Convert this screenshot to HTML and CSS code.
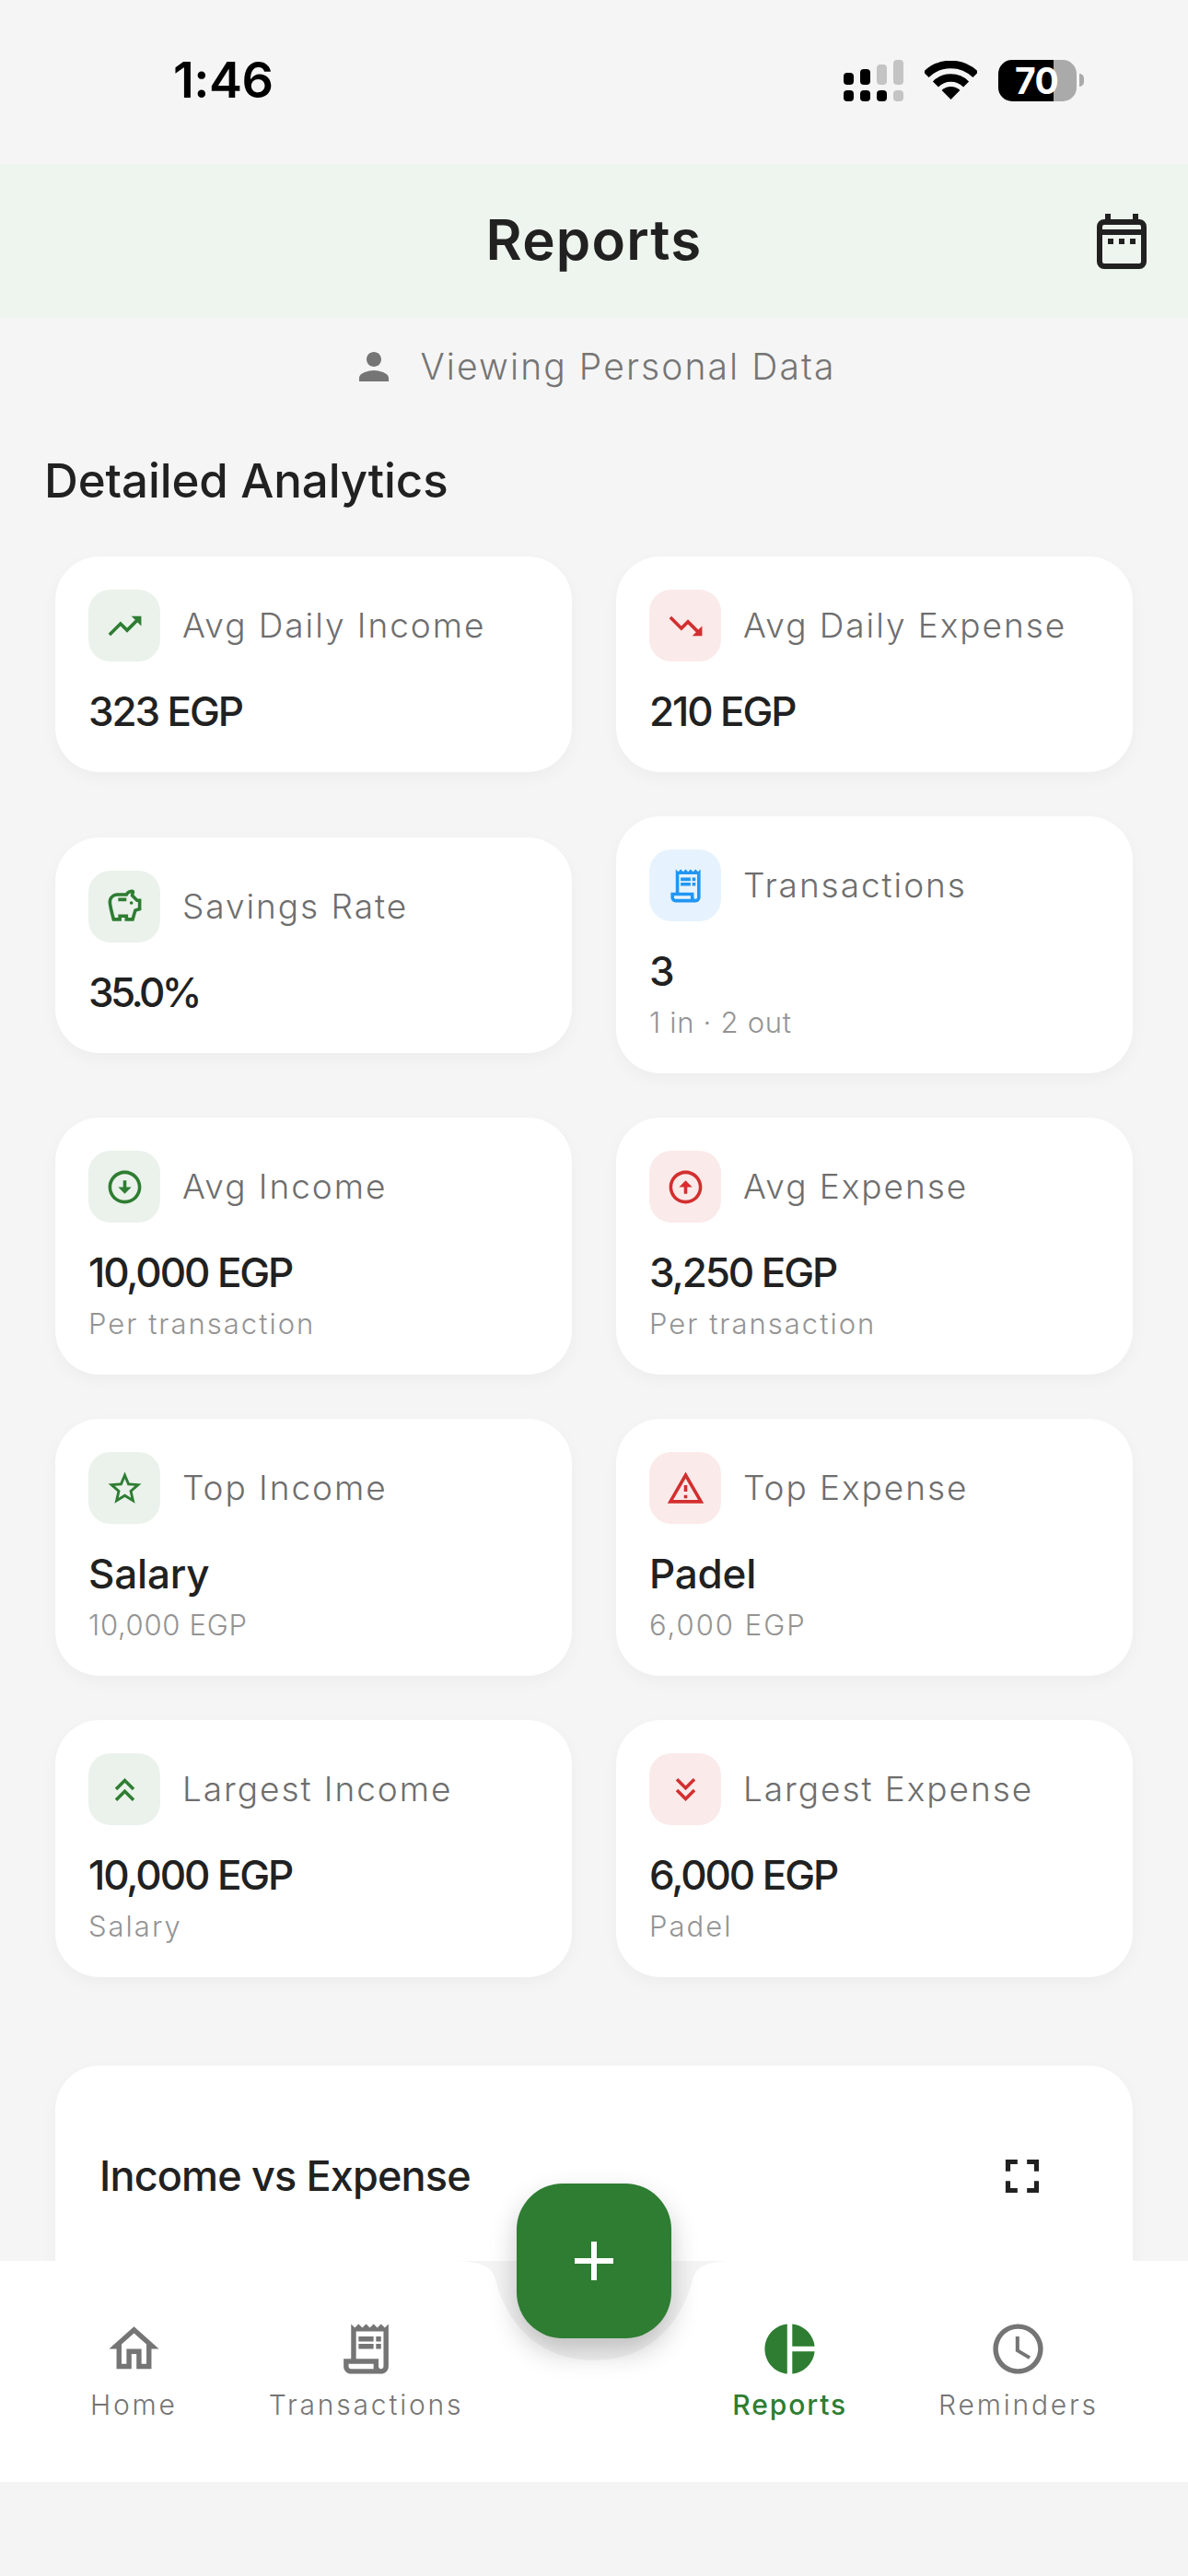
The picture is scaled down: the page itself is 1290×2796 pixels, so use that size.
FILE: index.html
```html
<!DOCTYPE html>
<html lang="en">
<head>
<meta charset="utf-8">
<title>Reports</title>
<link rel="stylesheet" href="styles.css">
</head>
<body>
<div class="phone">
  <div class="status">
    <span class="status__time">1:46</span>
    <div class="status__icons">
      <svg class="status__signal" viewBox="0 0 65 45" width="65" height="45">
        <rect class="k" x="0" y="14" width="11" height="13" rx="4"/><rect class="k" x="18" y="10" width="11" height="17" rx="4"/><rect class="g" x="36" y="5" width="11" height="22" rx="4"/><rect class="g" x="54" y="0" width="11" height="27" rx="4"/>
        <rect class="k" x="0" y="33" width="11" height="12" rx="4"/><rect class="k" x="18" y="33" width="11" height="12" rx="4"/><rect class="k" x="36" y="33" width="11" height="12" rx="4"/><rect class="g" x="54" y="33" width="11" height="12" rx="4"/>
      </svg>
      <svg class="status__wifi" viewBox="0 0 57 42" width="57" height="42">
        <path class="arc" d="M1.6 15.1A38 38 0 0 1 55.4 15.1"/>
        <path class="arc" d="M11.9 25.4A23.5 23.5 0 0 1 45.1 25.4"/>
        <path class="wedge" d="M28.5 42L18.6 32.1A14 14 0 0 1 38.4 32.1Z"/>
      </svg>
      <div class="battery"><span class="battery__level">70</span></div>
      <span class="battery__nub"></span>
    </div>
  </div>

  <header class="header">
    <span class="header__spacer"></span>
    <h1 class="header__title">Reports</h1>
    <svg class="header__cal" viewBox="0 0 54 60" width="54" height="60">
      <rect class="cal-frame" x="3" y="9" width="48" height="48" rx="5"/>
      <path class="cal-fill" d="M9 0h6v8H9zM39 0h6v8h-6zM3 17h48v6H3zM12 27h6v6h-6zM24 27h6v6h-6zM36 27h6v6h-6z"/>
    </svg>
  </header>

  <main class="main">
    <div class="viewing">
      <svg class="viewing__icon" viewBox="0 0 24 24"><path d="M12 12c2.21 0 4-1.79 4-4s-1.79-4-4-4-4 1.79-4 4 1.79 4 4 4zm0 2c-2.67 0-8 1.34-8 4v2h16v-2c0-2.66-5.33-4-8-4z"/></svg>
      <span class="viewing__text">Viewing Personal Data</span>
    </div>

    <h2 class="section-title">Detailed Analytics</h2>

    <div class="grid">
      <section class="card">
        <div class="card__head">
          <span class="tile tile--green"><svg class="tile__icon" viewBox="0 0 24 24"><path d="M16 6l2.29 2.29-4.88 4.88-4-4L2 16.59 3.41 18l6-6 4 4 6.3-6.29L22 12V6z"/></svg></span>
          <span class="card__label">Avg Daily Income</span>
        </div>
        <div class="card__value card__value--num">323 EGP</div>
      </section>
      <section class="card">
        <div class="card__head">
          <span class="tile tile--red"><svg class="tile__icon" viewBox="0 0 24 24"><path d="M16 18l2.29-2.29-4.88-4.88-4 4L2 7.41 3.41 6l6 6 4-4 6.3 6.29L22 12v6z"/></svg></span>
          <span class="card__label">Avg Daily Expense</span>
        </div>
        <div class="card__value card__value--num">210 EGP</div>
      </section>

      <section class="card">
        <div class="card__head">
          <span class="tile tile--green"><svg class="tile__icon" viewBox="0 0 24 24"><path d="M15 10c0-.55.45-1 1-1s1 .45 1 1-.45 1-1 1-1-.45-1-1zM8 9h5V7H8v2zm14-1.5v6.97l-2.82.94L17.5 21H12v-2h-2v2H4.5S2 12.54 2 9.5 4.46 4 7.5 4h5c.91-1.21 2.36-2 4-2 .83 0 1.5.67 1.5 1.5 0 .21-.04.41-.12.6-.14.31-.26.67-.33 1.06L19.82 7.5H22zm-2 2h-1L15.5 6c0-.65.09-1.29.26-1.91-.97.25-1.76.97-2.09 1.91H7.5C5.57 6 4 7.57 4 9.5c0 1.88 1.22 6.65 2.01 9.5H8v-2h6v2h2.01l1.55-5.15 2.44-.82V9.5z"/></svg></span>
          <span class="card__label">Savings Rate</span>
        </div>
        <div class="card__value card__value--pct">35.0%</div>
      </section>
      <section class="card">
        <div class="card__head">
          <span class="tile tile--blue"><svg class="tile__icon" viewBox="0 0 24 24"><path d="M19.5 3.5L18 2l-1.5 1.5L15 2l-1.5 1.5L12 2l-1.5 1.5L9 2 7.5 3.5 6 2v14H3v3c0 1.66 1.34 3 3 3h12c1.66 0 3-1.34 3-3V2l-1.5 1.5zM15 20H6c-.55 0-1-.45-1-1v-1h10v2zm4-1c0 .55-.45 1-1 1s-1-.45-1-1v-3H8V5h11v14z"/><path d="M9 7h6v2H9zM16 7h2v2h-2zM9 10h6v2H9zM16 10h2v2h-2z"/></svg></span>
          <span class="card__label">Transactions</span>
        </div>
        <div class="card__value">3</div>
        <div class="card__sub card__sub--num">1 in · 2 out</div>
      </section>

      <section class="card">
        <div class="card__head">
          <span class="tile tile--green"><svg class="tile__icon" viewBox="0 0 24 24"><path d="M12 4c4.41 0 8 3.59 8 8s-3.59 8-8 8-8-3.59-8-8 3.59-8 8-8m0-2C6.48 2 2 6.48 2 12s4.48 10 10 10 10-4.48 10-10S17.52 2 12 2zm1 10V8h-2v4H8l4 4 4-4h-3z"/></svg></span>
          <span class="card__label">Avg Income</span>
        </div>
        <div class="card__value card__value--num">10,000 EGP</div>
        <div class="card__sub">Per transaction</div>
      </section>
      <section class="card">
        <div class="card__head">
          <span class="tile tile--red"><svg class="tile__icon" viewBox="0 0 24 24"><path d="M12 20c-4.41 0-8-3.59-8-8s3.59-8 8-8 8 3.59 8 8-3.59 8-8 8m0 2c5.52 0 10-4.48 10-10S17.52 2 12 2 2 6.48 2 12s4.48 10 10 10zm-1-10v4h2v-4h3l-4-4-4 4h3z"/></svg></span>
          <span class="card__label">Avg Expense</span>
        </div>
        <div class="card__value card__value--num">3,250 EGP</div>
        <div class="card__sub">Per transaction</div>
      </section>

      <section class="card">
        <div class="card__head">
          <span class="tile tile--green"><svg class="tile__icon" viewBox="0 0 24 24"><path d="M22 9.24l-7.19-.62L12 2 9.19 8.63 2 9.24l5.46 4.73L5.82 21 12 17.27 18.18 21l-1.63-7.03L22 9.24zM12 15.4l-3.76 2.27 1-4.28-3.32-2.88 4.38-.38L12 6.1l1.71 4.04 4.38.38-3.32 2.88 1 4.28L12 15.4z"/></svg></span>
          <span class="card__label">Top Income</span>
        </div>
        <div class="card__value">Salary</div>
        <div class="card__sub card__sub--num">10,000 EGP</div>
      </section>
      <section class="card">
        <div class="card__head">
          <span class="tile tile--red"><svg class="tile__icon" viewBox="0 0 24 24"><path d="M12 5.99L19.53 19H4.47L12 5.99M12 2L1 21h22L12 2zm1 14h-2v2h2v-2zm0-6h-2v4h2v-4z"/></svg></span>
          <span class="card__label">Top Expense</span>
        </div>
        <div class="card__value">Padel</div>
        <div class="card__sub">6,000 EGP</div>
      </section>

      <section class="card">
        <div class="card__head">
          <span class="tile tile--green"><svg class="tile__icon" viewBox="0 0 24 24"><path d="M6 17.59L7.41 19 12 14.42 16.59 19 18 17.59l-6-6z"/><path d="M6 11l1.41 1.41L12 7.83l4.59 4.58L18 11l-6-6z"/></svg></span>
          <span class="card__label">Largest Income</span>
        </div>
        <div class="card__value card__value--num">10,000 EGP</div>
        <div class="card__sub">Salary</div>
      </section>
      <section class="card">
        <div class="card__head">
          <span class="tile tile--red"><svg class="tile__icon" viewBox="0 0 24 24"><path d="M18 6.41L16.59 5 12 9.58 7.41 5 6 6.41l6 6z"/><path d="M18 13l-1.41-1.41L12 16.17l-4.59-4.58L6 13l6 6z"/></svg></span>
          <span class="card__label">Largest Expense</span>
        </div>
        <div class="card__value card__value--num">6,000 EGP</div>
        <div class="card__sub">Padel</div>
      </section>
    </div>

    <section class="chart">
      <div class="chart__head">
        <span class="chart__title">Income vs Expense</span>
        <svg class="chart__expand" viewBox="0 0 24 24"><path d="M7 14H5v5h5v-2H7v-3zm-2-4h2V7h3V5H5v5zm12 7h-3v2h5v-5h-2v3zM14 5v2h3v3h2V5h-5z"/></svg>
      </div>
    </section>
  </main>

  <nav class="nav">
    <svg class="nav__notch" viewBox="0 0 310 108" width="310" height="108"><path d="M0 0C28 0 44 4 48 20C60 70 98 108 155 108C212 108 250 70 262 20C266 4 282 0 310 0Z"/></svg>
    <a class="nav__item">
      <svg class="nav__icon" viewBox="0 0 24 24"><path d="M12 5.69l5 4.5V18h-2v-6H9v6H7v-7.81l5-4.5M12 3L2 12h3v8h6v-6h2v6h6v-8h3L12 3z"/></svg>
      <span class="nav__label">Home</span>
    </a>
    <a class="nav__item">
      <svg class="nav__icon" viewBox="0 0 24 24"><path d="M19.5 3.5L18 2l-1.5 1.5L15 2l-1.5 1.5L12 2l-1.5 1.5L9 2 7.5 3.5 6 2v14H3v3c0 1.66 1.34 3 3 3h12c1.66 0 3-1.34 3-3V2l-1.5 1.5zM15 20H6c-.55 0-1-.45-1-1v-1h10v2zm4-1c0 .55-.45 1-1 1s-1-.45-1-1v-3H8V5h11v14z"/><path d="M9 7h6v2H9zM16 7h2v2h-2zM9 10h6v2H9zM16 10h2v2h-2z"/></svg>
      <span class="nav__label">Transactions</span>
    </a>
    <span class="nav__gap"></span>
    <a class="nav__item nav__item--active">
      <svg class="nav__icon" viewBox="0 0 24 24"><path d="M11 2v20c-5.07-.5-9-4.79-9-10s3.93-9.5 9-10zm2.03 0v8.99H22c-.47-4.74-4.24-8.52-8.97-8.99zm0 11.01V22c4.74-.47 8.5-4.25 8.97-8.99h-8.97z"/></svg>
      <span class="nav__label">Reports</span>
    </a>
    <a class="nav__item">
      <svg class="nav__icon" viewBox="0 0 24 24"><path d="M11.99 2C6.47 2 2 6.48 2 12s4.47 10 9.99 10C17.52 22 22 17.52 22 12S17.52 2 11.99 2zM12 20c-4.42 0-8-3.58-8-8s3.58-8 8-8 8 3.58 8 8-3.58 8-8 8zm.5-13H11v6l5.25 3.15.75-1.23-4.5-2.67z"/></svg>
      <span class="nav__label">Reminders</span>
    </a>
    <button class="fab" type="button" aria-label="Add">
      <svg class="fab__icon" viewBox="0 0 24 24"><path d="M19 13h-6v6h-2v-6H5v-2h6V5h2v6h6v2z"/></svg>
    </button>
  </nav>
  <div class="home-area"></div>
</div>
</body>
</html>
```
FILE: styles.css
```css
* { box-sizing: border-box; }
html, body { margin: 0; padding: 0; }
body { background: #f5f5f5; color: #212121; font-family: Inter, "Liberation Sans", sans-serif; }
h1, h2 { margin: 0; font: inherit; }

.phone { width: 1290px; height: 2796px; display: flex; flex-direction: column; overflow: hidden; }

/* status bar */
.status { height: 178px; flex: none; display: flex; align-items: center; justify-content: space-between; padding: 0 113px 4px 188px; color: #000; }
.status__time { font-size: 54px; font-weight: 600; line-height: 60px; letter-spacing: -.5px; }
.status__icons { display: flex; align-items: center; }
.status__signal { display: block; margin-right: 23px; }
.status__signal .k { fill: #000; }
.status__signal .g { fill: #c4c4c4; }
.status__wifi { display: block; margin-right: 23px; }
.status__wifi .arc { fill: none; stroke: #000; stroke-width: 8.5; }
.status__wifi .wedge { fill: #000; }
.battery { width: 85px; height: 45px; border-radius: 15px; background: linear-gradient(90deg, #000 0 60px, #aaa 60px); display: flex; align-items: center; padding-left: 18px; }
.battery__level { color: #fff; font-size: 39px; font-weight: 700; line-height: 45px; letter-spacing: -.5px; }
.battery__nub { width: 5px; height: 14px; margin-left: 3px; background: #aaa; border-radius: 0 5px 5px 0; }

/* header */
.header { height: 167px; flex: none; background: #eef5ee; display: flex; align-items: center; justify-content: space-between; padding: 0 45px; }
.header__spacer { width: 54px; }
.header__title { font-size: 60px; font-weight: 600; line-height: 84px; color: #212121; letter-spacing: 1.2px; margin-top: -3px; }
.header__cal { display: block; }
.cal-frame { fill: none; stroke: #212121; stroke-width: 6; }
.cal-fill { fill: #212121; }

/* main */
.main { flex: none; height: 2109px; overflow: hidden; }
.viewing { display: flex; align-items: center; justify-content: center; gap: 26px; margin-top: 29px; height: 48px; }
.viewing__icon { width: 48px; height: 48px; fill: #757575; display: block; }
.viewing__text { font-size: 39px; font-weight: 300; line-height: 48px; color: #757575; letter-spacing: 2.1px; }
.section-title { margin: 65px 0 47px 48px; font-size: 51px; line-height: 70px; font-weight: 500; color: #212121; letter-spacing: -.1px; }

.grid { display: grid; grid-template-columns: 561px 561px; gap: 48px; padding: 0 60px; align-items: center; }
.card { background: #fff; border-radius: 48px; padding: 36px 36px 33px; box-shadow: 0 6px 18px rgba(0,0,0,.035); }
.card__head { display: flex; align-items: center; gap: 24px; }
.tile { width: 78px; height: 78px; border-radius: 24px; display: flex; align-items: center; justify-content: center; flex: none; }
.tile--green { background: #eaf2eb; color: #2e7d32; }
.tile--red { background: #fbeaea; color: #d32f2f; }
.tile--blue { background: #e6f3fe; color: #2196f3; }
.tile__icon { width: 43px; height: 43px; fill: currentColor; display: block; }
.card__label { font-size: 37px; font-weight: 300; line-height: 50px; color: #6e6e6e; letter-spacing: 1.95px; white-space: nowrap; }
.card__value { margin-top: 21px; font-size: 44px; line-height: 66px; font-weight: 500; color: #212121; letter-spacing: -.2px; white-space: nowrap; }
.card__value--num { letter-spacing: -2.1px; }
.card__value--pct { letter-spacing: -3.6px; }
.card__sub { font-size: 31px; font-weight: 300; line-height: 45px; color: #949494; letter-spacing: 2px; white-space: nowrap; }
.card__sub--num { letter-spacing: .7px; }

.chart { margin: 96px 60px 0; height: 400px; background: #fff; border-radius: 48px; box-shadow: 0 6px 18px rgba(0,0,0,.035); }
.chart__head { display: flex; align-items: center; justify-content: space-between; padding: 89px 89px 0 48px; }
.chart__title { font-size: 45px; line-height: 62px; font-weight: 500; color: #212121; letter-spacing: -.85px; }
.chart__expand { width: 62px; height: 62px; fill: #212121; display: block; }

/* bottom nav */
.nav { position: relative; flex: none; height: 240px; background: #fff; display: flex; align-items: flex-start; gap: 99px; padding: 63px 0 0 98px; }
.nav__notch { position: absolute; left: 490px; top: 0; fill: #f4f4f4; }
.nav__item { display: flex; flex-direction: column; align-items: center; color: #757575; text-decoration: none; }
.nav__item--active { color: #2e7d32; }
.nav__icon { width: 65px; height: 65px; fill: currentColor; display: block; }
.nav__label { margin-top: 6px; font-size: 30px; font-weight: 300; line-height: 45px; letter-spacing: 2.8px; white-space: nowrap; }
.nav__item--active .nav__label { font-weight: 500; letter-spacing: 1.9px; }
.nav__gap { width: 94px; }
.fab { position: absolute; left: 561px; top: -84px; width: 168px; height: 168px; border: 0; padding: 0; border-radius: 50px; background: #2e7d32; display: flex; align-items: center; justify-content: center; box-shadow: 0 14px 30px rgba(0,0,0,.22); }
.fab__icon { width: 72px; height: 72px; fill: #fff; display: block; }

.home-area { flex: 1; background: #f4f4f4; }
```
